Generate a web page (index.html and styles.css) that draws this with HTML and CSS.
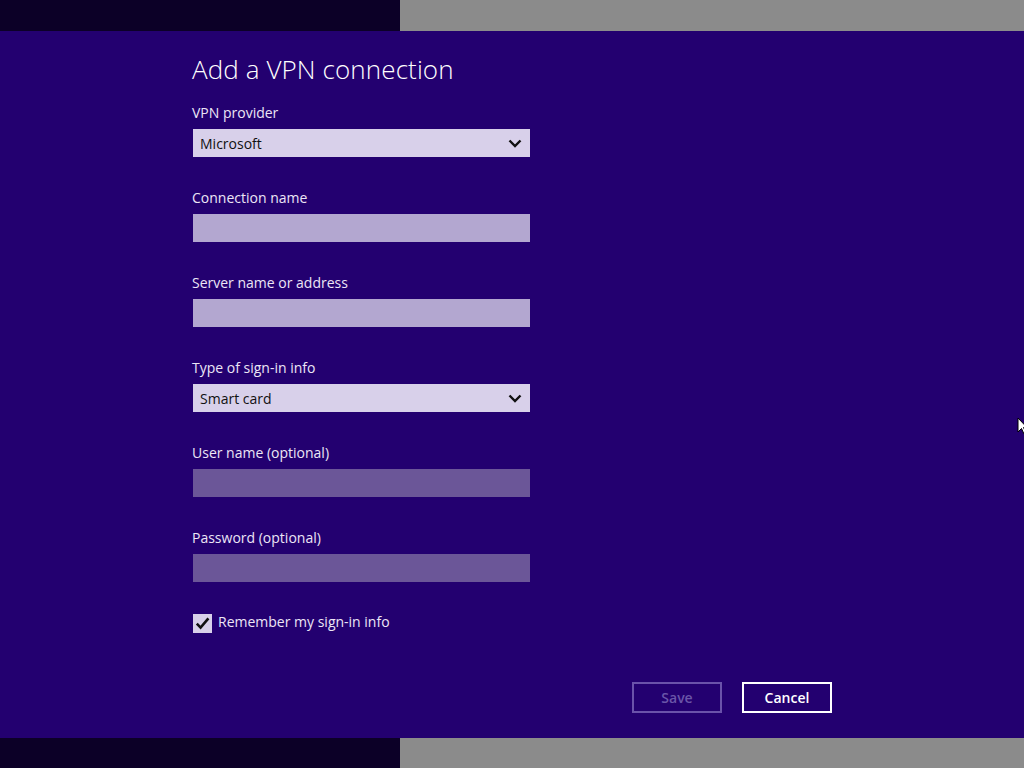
FILE: index.html
```html
<!DOCTYPE html>
<html>
<head>
<meta charset="utf-8">
<link rel="stylesheet" href="styles.css">
</head>
<body>
<div class="bar"><div class="bar-dark"></div><div class="bar-gray"></div></div>
<main class="main">
  <div class="form">
    <h1 class="title">Add a VPN connection</h1>
    <div class="field">
      <div class="label">VPN provider</div>
      <div class="select"><span>Microsoft</span>
        <svg class="chev" width="14" height="9" viewBox="0 0 14 9"><path d="M1.5 1.5 L7 7 L12.5 1.5" fill="none" stroke="#111" stroke-width="2.4"/></svg>
      </div>
    </div>
    <div class="field">
      <div class="label">Connection name</div>
      <div class="input"></div>
    </div>
    <div class="field">
      <div class="label">Server name or address</div>
      <div class="input"></div>
    </div>
    <div class="field">
      <div class="label">Type of sign-in info</div>
      <div class="select"><span>Smart card</span>
        <svg class="chev" width="14" height="9" viewBox="0 0 14 9"><path d="M1.5 1.5 L7 7 L12.5 1.5" fill="none" stroke="#111" stroke-width="2.4"/></svg>
      </div>
    </div>
    <div class="field">
      <div class="label">User name (optional)</div>
      <div class="input disabled"></div>
    </div>
    <div class="field">
      <div class="label">Password (optional)</div>
      <div class="input disabled"></div>
    </div>
    <div class="check-row">
      <div class="checkbox">
        <svg width="15" height="15" viewBox="0 0 15 15"><path d="M1.8 7.6 L5.6 11.6 L13.4 2.4" fill="none" stroke="#111" stroke-width="2.6"/></svg>
      </div>
      <span class="check-label">Remember my sign-in info</span>
    </div>
    <div class="buttons">
      <div class="btn btn-disabled">Save</div>
      <div class="btn btn-cancel">Cancel</div>
    </div>
  </div>
  <svg class="cursor" width="10" height="18" viewBox="0 0 10 18"><path d="M1 1 L1 15 L4.5 11.5 L7 17 L9 16 L6.5 10.5 L10 10.5 Z" fill="#fff" stroke="#000" stroke-width="1"/></svg>
</main>
<div class="bar"><div class="bar-dark"></div><div class="bar-gray"></div></div>
</body>
</html>
```
FILE: styles.css
```css
html, body {
  margin: 0;
  padding: 0;
  width: 1024px;
  height: 768px;
  overflow: hidden;
  background: #230070;
  font-family: "Open Sans", "Noto Sans", sans-serif;
}
.bar {
  display: flex;
  height: 31px;
}
.bar-dark { width: 400px; background: #0c0027; }
.bar-gray { flex: 1; background: #8b8b8b; }
.main {
  position: relative;
  height: 707px;
  background: #230070;
}
.form {
  padding-left: 192px;
  padding-top: 20px;
  width: 640px;
}
.title {
  margin: 0 0 19px 0;
  font-weight: 300;
  font-size: 26px;
  line-height: 36px;
  color: #ffffff;
  letter-spacing: 0.1px;
}
.field {
  height: 85px;
}
.label {
  font-size: 14px;
  line-height: 14px;
  color: #ece6f6;
  height: 23px;
}
.select, .input {
  margin-left: 1px;
  width: 337px;
  height: 28px;
  box-sizing: border-box;
}
.select {
  background: #d8d0ea;
  display: flex;
  align-items: center;
  justify-content: space-between;
  padding: 0 8px 0 7px;
  font-size: 14px;
  color: #111;
}
.input { background: #b3a7d0; }
.input.disabled { background: #6b5698; }
.check-row {
  display: flex;
  align-items: center;
  margin-top: -3px;
  height: 20px;
}
.checkbox {
  margin-left: 1px;
  width: 19px;
  height: 19px;
  background: #d8d0ea;
  display: flex;
  align-items: center;
  justify-content: center;
}
.check-label {
  margin-left: 6px;
  font-size: 14px;
  line-height: 16px;
  color: #ece6f6;
  margin-top: -2px;
}
.buttons {
  display: flex;
  gap: 20px;
  margin-top: 49px;
  margin-left: 440px;
}
.btn {
  width: 90px;
  height: 31px;
  box-sizing: border-box;
  border: 2px solid;
  display: flex;
  align-items: center;
  justify-content: center;
  font-size: 14px;
  font-weight: 600;
}
.btn-disabled { border-color: #6a52aa; color: #6a55a8; }
.btn-cancel { border-color: #ffffff; color: #ffffff; }
.cursor {
  position: absolute;
  left: 1017px;
  top: 386px;
}
```
